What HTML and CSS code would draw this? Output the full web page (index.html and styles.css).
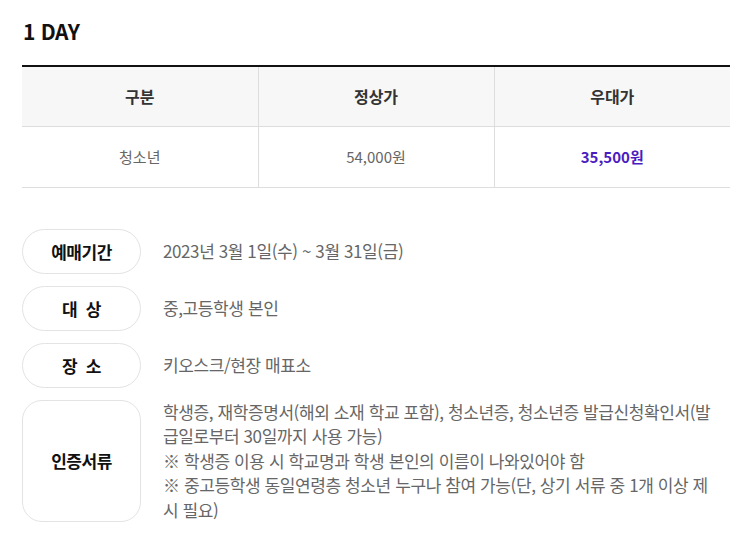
FILE: index.html
```html
<!DOCTYPE html>
<html lang="ko">
<head>
<meta charset="utf-8">
<link rel="stylesheet" href="styles.css">
</head>
<body>
<div class="page">
  <h2 class="title">1 DAY</h2>
  <table class="price">
    <thead>
      <tr><th>구분</th><th>정상가</th><th>우대가</th></tr>
    </thead>
    <tbody>
      <tr><td>청소년</td><td>54,000원</td><td class="sale">35,500원</td></tr>
    </tbody>
  </table>
  <ul class="info">
    <li class="row"><span class="label">예매기간</span><div class="text">2023년 3월 1일(수) ~ 3월 31일(금)</div></li>
    <li class="row"><span class="label">대&nbsp;&nbsp;상</span><div class="text">중,고등학생 본인</div></li>
    <li class="row"><span class="label">장&nbsp;&nbsp;소</span><div class="text">키오스크/현장 매표소</div></li>
    <li class="row"><span class="label">인증서류</span><div class="text"><p>학생증, 재학증명서(해외 소재 학교 포함), 청소년증, 청소년증 발급신청확인서(발급일로부터 30일까지 사용 가능)<br>※ 학생증 이용 시 학교명과 학생 본인의 이름이 나와있어야 함<br>※ 중고등학생 동일연령층 청소년 누구나 참여 가능(단, 상기 서류 중 1개 이상 제시 필요)</p></div></li>
  </ul>
</div>
</body>
</html>
```
FILE: styles.css
```css
* { box-sizing: border-box; }
body {
  margin: 0;
  background: #fff;
  font-family: "Noto Sans CJK KR", "Noto Sans", sans-serif;
  color: #666;
}
.page {
  padding: 17px 18px 0 22px;
}
.title {
  margin: 0 0 20px 1px;
  font-size: 21px;
  line-height: 28px;
  font-weight: 700;
  color: #111;
  letter-spacing: -0.3px;
}
.price {
  width: 708px;
  border-collapse: collapse;
  table-layout: fixed;
  border-top: 2px solid #111;
}
.price th, .price td {
  height: 61px;
  text-align: center;
  font-size: 15px;
  border-bottom: 1px solid #ddd;
  border-left: 1px solid #ddd;
  padding: 0;
}
.price th:first-child, .price td:first-child { border-left: none; }
.price th {
  background: #f7f7f7;
  color: #333;
  font-size: 16px;
  font-weight: 700;
  height: 60px;
}
.price td { color: #666; font-weight: 400; }
.price td.sale { color: #4b1cc1; font-weight: 700; }
.info {
  list-style: none;
  margin: 41px 12px 0 0;
  padding: 0;
  display: flex;
  flex-direction: column;
  gap: 12px;
}
.row {
  display: flex;
  align-items: stretch;
  gap: 22px;
}
.label {
  flex: 0 0 119px;
  min-height: 45px;
  border: 1px solid #e3e3e3;
  border-radius: 23px;
  display: flex;
  align-items: center;
  justify-content: center;
  font-size: 17px;
  font-weight: 700;
  color: #111;
  letter-spacing: -0.5px;
}
.row:last-child .label { border-radius: 20px; }
.text {
  flex: 1;
  display: flex;
  align-items: center;
  font-size: 17px;
  line-height: 24.5px;
  color: #666;
  letter-spacing: -0.4px;
}
.text p { margin: 0; }
```
